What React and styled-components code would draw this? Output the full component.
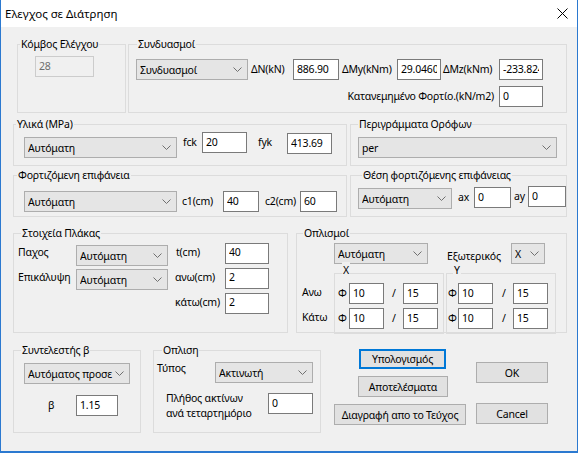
import React from 'react';
import styled, { createGlobalStyle } from 'styled-components';

const GlobalStyle = createGlobalStyle`
  * { box-sizing: border-box; }
  html, body {
    margin: 0;
    padding: 0;
    background: #f0f0f0;
  }
  body {
    font-family: "Noto Sans", "Open Sans", "Liberation Sans", sans-serif;
    font-size: 10.5px;
    letter-spacing: -0.2px;
    color: #000;
  }
`;

const Window = styled.div`
  width: 578px;
  height: 453px;
  border: 1px solid #2b79d0;
  border-top: none;
  border-bottom-width: 2px;
  background: #f0f0f0;
  display: flex;
  flex-direction: column;
  overflow: hidden;
`;

const TitleBar = styled.div`
  flex-shrink: 0;
  height: 27px;
  background: #fff;
  display: flex;
  align-items: center;
  justify-content: space-between;
  padding: 0 9px 0 4px;
  font-size: 11.5px;
  letter-spacing: 0;
`;

const Content = styled.div`
  padding-left: 12px;
  display: flex;
  flex-direction: column;
`;

const Row = styled.div`
  display: flex;
  align-items: flex-start;
  margin-top: ${p => p.$mt || 0}px;
  padding-left: ${p => p.$pl || 0}px;
  gap: ${p => p.$gap || 0}px;
`;

const Group = styled.div`
  position: relative;
  flex-shrink: 0;
  width: ${p => p.$w}px;
  height: ${p => p.$h}px;
  margin-left: ${p => p.$ml || 0}px;
  border: 1px solid #dcdcdc;
  padding: ${p => p.$pad || '0'};
  display: flex;
  flex-direction: column;
  align-items: flex-start;
`;

const Legend = styled.span`
  position: absolute;
  top: ${p => (p.$top === undefined ? -9 : p.$top)}px;
  left: ${p => p.$x}px;
  padding: 0 1px;
  line-height: 16px;
  background: #f0f0f0;
  white-space: nowrap;
`;

const Line = styled.div`
  display: flex;
  align-items: flex-start;
  margin: ${p => p.$m || '0'};
  align-self: ${p => (p.$end ? 'flex-end' : 'auto')};
`;

const Label = styled.span`
  flex-shrink: 0;
  width: ${p => (p.$w ? `${p.$w}px` : 'auto')};
  padding-left: ${p => p.$pl || 0}px;
  padding-right: ${p => p.$pr || 0}px;
  margin-top: ${p => p.$mt || 0}px;
  line-height: ${p => p.$lh || 21}px;
  text-align: ${p => p.$align || 'left'};
  white-space: nowrap;
`;

const TextBox = styled.input`
  flex-shrink: 0;
  width: ${p => p.$w}px;
  height: ${p => p.$h || 21}px;
  margin-top: ${p => p.$mt || 0}px;
  border: 1px solid ${p => (p.disabled ? '#cccccc' : '#7a7a7a')};
  background: ${p => (p.disabled ? '#f0f0f0' : '#fff')};
  color: ${p => (p.disabled ? '#6d6d6d' : '#000')};
  -webkit-text-fill-color: ${p => (p.disabled ? '#6d6d6d' : '#000')};
  font: inherit;
  letter-spacing: inherit;
  padding: 0 3px 2px;
  border-radius: 0;
  outline: none;
`;

const ComboBox = styled.div`
  flex-shrink: 0;
  width: ${p => p.$w}px;
  height: ${p => p.$h || 21}px;
  margin-top: ${p => p.$mt || 0}px;
  border: 1px solid #adadad;
  background: #e5e5e5;
  display: flex;
  align-items: center;
  padding: 0 5px 0 3px;
`;

const ComboText = styled.span`
  flex: 1;
  min-width: 0;
  overflow: hidden;
  white-space: nowrap;
  padding-top: 1px;
`;

const Grid = styled.div`
  display: grid;
  grid-template-columns: 58px 92px 57px 44px;
  grid-auto-rows: 21px;
  row-gap: 4px;
  margin: 8px 0 0 4px;
`;

const Cell = styled.div`
  grid-column: ${p => p.$col};
  grid-row: ${p => p.$row};
  padding-left: ${p => p.$pl || 0}px;
  line-height: 21px;
  white-space: nowrap;
`;

const Stack = styled.div`
  display: flex;
  flex-direction: column;
  gap: ${p => p.$gap || 0}px;
  width: ${p => (p.$w ? `${p.$w}px` : 'auto')};
  padding-top: ${p => p.$pt || 0}px;
  margin-top: ${p => p.$mt || 0}px;
  margin-left: ${p => p.$ml || 0}px;
  flex-shrink: 0;
`;

const Button = styled.button`
  flex-shrink: 0;
  width: ${p => p.$w}px;
  height: ${p => p.$h || 21}px;
  margin-left: ${p => p.$ml || 0}px;
  margin-top: ${p => p.$mt || 0}px;
  padding: 0;
  font: inherit;
  letter-spacing: inherit;
  color: #000;
  background: #e1e1e1;
  border: 1px solid ${p => (p.$focus ? '#0078d7' : '#adadad')};
  box-shadow: ${p => (p.$focus ? 'inset 0 0 0 1px #0078d7' : 'none')};
  border-radius: 0;
  white-space: nowrap;
`;

const Chevron = () => (
  <svg width="9" height="5" viewBox="0 0 9 5">
    <path d="M0.5 0.5 L4.5 4.5 L8.5 0.5" fill="none" stroke="#707070" strokeWidth="1" />
  </svg>
);

const CloseIcon = () => (
  <svg width="11" height="11" viewBox="0 0 11 11">
    <path d="M0.5 0.5 L10.5 10.5 M10.5 0.5 L0.5 10.5" stroke="#000" strokeWidth="1" />
  </svg>
);

const Combo = ({ w, h, mt, children }) => (
  <ComboBox $w={w} $h={h} $mt={mt}>
    <ComboText>{children}</ComboText>
    <Chevron />
  </ComboBox>
);

const BarRow = ({ phiW, pl, slashPl, slashW }) => (
  <Line>
    <Label $w={phiW} $pl={pl}>Φ</Label>
    <TextBox $w={35} defaultValue="10" />
    <Label $w={slashW} $pl={slashPl}>/</Label>
    <TextBox $w={35} defaultValue="15" />
  </Line>
);

const BarGroup = ({ title, lx, ml, ...bar }) => (
  <Group $w={110} $h={61} $ml={ml} $pad="9px 0 0 0">
    <Legend $x={lx} $top={-12}>{title}</Legend>
    <Stack $gap={4}>
      <BarRow {...bar} />
      <BarRow {...bar} />
    </Stack>
  </Group>
);

export default function App() {
  return (
    <>
      <GlobalStyle />
      <Window>
        <TitleBar>
          <span>Ελεγχος σε Διάτρηση</span>
          <CloseIcon />
        </TitleBar>
        <Content>
          <Row $mt={17} $pl={4} $gap={2}>
            <Group $w={109} $h={69} $pad="11px 0 0 17px">
              <Legend $x={2}>Κόμβος Ελέγχου</Legend>
              <TextBox $w={59} disabled defaultValue="28" />
            </Group>
            <Group $w={439} $h={69}>
              <Legend $x={8}>Συνδυασμοί</Legend>
              <Line $m="14px 0 0 7px">
                <Combo w={112}>Συνδυασμοί</Combo>
                <Label $w={45} $pl={3}>ΔN(kN)</Label>
                <TextBox $w={46} defaultValue="886.90" />
                <Label $w={58} $pl={3}>ΔMy(kNm)</Label>
                <TextBox $w={44} defaultValue="29.0460" />
                <Label $w={58} $pl={2}>ΔMz(kNm)</Label>
                <TextBox $w={44} defaultValue="-233.8245" />
              </Line>
              <Line $m="6px 23px 0 0" $end>
                <Label $pr={5}>Κατανεμημένο Φορτίο.(kN/m2)</Label>
                <TextBox $w={44} defaultValue="0" />
              </Line>
            </Group>
          </Row>

          <Row $mt={11} $gap={3}>
            <Group $w={334} $h={42}>
              <Legend $x={2}>Υλικά (MPa)</Legend>
              <Line $m="0 0 0 10px">
                <Combo w={153} mt={12}>Αυτόματη</Combo>
                <Label $w={25} $pl={6} $mt={7}>fck</Label>
                <TextBox $w={45} $mt={7} defaultValue="20" />
                <Label $w={40} $pl={11} $mt={7}>fyk</Label>
                <TextBox $w={45} $mt={8} defaultValue="413.69" />
              </Line>
            </Group>
            <Group $w={217} $h={42}>
              <Legend $x={7}>Περιγράμματα Ορόφων</Legend>
              <Line $m="0 0 0 7px">
                <Combo w={199} mt={12}>per</Combo>
              </Line>
            </Group>
          </Row>

          <Row $mt={9} $gap={3}>
            <Group $w={334} $h={42}>
              <Legend $x={3}>Φορτιζόμενη επιφάνεια</Legend>
              <Line $m="0 0 0 10px">
                <Combo w={153} mt={15}>Αυτόματη</Combo>
                <Label $w={46} $pl={5} $mt={15}>c1(cm)</Label>
                <TextBox $w={36} $mt={15} defaultValue="40" />
                <Label $w={41} $pl={6} $mt={15}>c2(cm)</Label>
                <TextBox $w={37} $mt={15} defaultValue="60" />
              </Line>
            </Group>
            <Group $w={217} $h={42}>
              <Legend $x={11}>Θέση φορτιζόμενης επιφάνειας</Legend>
              <Line $m="0 0 0 7px">
                <Combo w={94} mt={12}>Αυτόματη</Combo>
                <Label $w={22} $pl={6} $mt={11}>ax</Label>
                <TextBox $w={37} $mt={11} defaultValue="0" />
                <Label $w={17} $pl={3} $mt={10}>ay</Label>
                <TextBox $w={38} $mt={10} defaultValue="0" />
              </Line>
            </Group>
          </Row>

          <Row $mt={16} $gap={8}>
            <Group $w={275} $h={100}>
              <Legend $x={7}>Στοιχεία Πλάκας</Legend>
              <Grid>
                <Cell $col={1} $row={1}>Παχος</Cell>
                <Cell $col={2} $row={1}>
                  <Combo w={92} mt={3}>Αυτόματη</Combo>
                </Cell>
                <Cell $col={3} $row={1} $pl={8}>t(cm)</Cell>
                <Cell $col={4} $row={1}>
                  <TextBox $w={44} defaultValue="40" />
                </Cell>
                <Cell $col={1} $row={2}>Επικάλυψη</Cell>
                <Cell $col={2} $row={2}>
                  <Combo w={92} mt={2}>Αυτόματη</Combo>
                </Cell>
                <Cell $col={3} $row={2} $pl={7}>ανω(cm)</Cell>
                <Cell $col={4} $row={2}>
                  <TextBox $w={44} defaultValue="2" />
                </Cell>
                <Cell $col={3} $row={3} $pl={7}>κάτω(cm)</Cell>
                <Cell $col={4} $row={3}>
                  <TextBox $w={44} defaultValue="2" />
                </Cell>
              </Grid>
            </Group>
            <Group $w={271} $h={100}>
              <Legend $x={6}>Οπλισμοί</Legend>
              <Line $m="9px 0 0 37px">
                <Combo w={94}>Αυτόματη</Combo>
                <Label $w={83} $pl={19} $mt={3}>Εξωτερικός</Label>
                <Combo w={34}>X</Combo>
              </Line>
              <Line $m="6px 0 0 0">
                <Stack $w={37} $pt={9} $gap={4}>
                  <Label $pl={5}>Ανω</Label>
                  <Label $pl={5}>Κάτω</Label>
                </Stack>
                <BarGroup title="X" lx={7} phiW={14} pl={3} slashPl={8} slashW={19} />
                <BarGroup title="Y" lx={6} ml={2} phiW={11} pl={1} slashPl={9} slashW={20} />
              </Line>
            </Group>
          </Row>

          <Row $mt={17}>
            <Group $w={128} $h={83} $pad="12px 0 0 10px">
              <Legend $x={7}>Συντελεστής β</Legend>
              <Combo w={106}>Αυτόματος προσε</Combo>
              <Line $m="11px 0 0 0">
                <Label $w={52} $pl={24}>β</Label>
                <TextBox $w={42} defaultValue="1.15" />
              </Line>
            </Group>
            <Group $w={168} $h={83} $ml={12} $pad="11px 0 0 0">
              <Legend $x={8}>Οπλιση</Legend>
              <Line>
                <Label $w={61} $pl={3} $mt={-4}>Τύπος</Label>
                <Combo w={98}>Ακτινωτή</Combo>
              </Line>
              <Line $m="10px 0 0 0">
                <Label $w={114} $pl={12} $lh={15} $mt={-2}>
                  Πλήθος ακτίνων
                  <br />
                  ανά τεταρτημόριο
                </Label>
                <TextBox $w={45} defaultValue="0" />
              </Line>
            </Group>
            <Stack $w={132} $ml={13} $mt={-1} $gap={7}>
              <Button $w={87} $h={20} $ml={25} $focus>Υπολογισμός</Button>
              <Button $w={90} $ml={24}>Αποτελέσματα</Button>
              <Button $w={132}>Διαγραφή απο το Τεύχος</Button>
            </Stack>
            <Stack $ml={10} $mt={-1}>
              <Button $w={72} $mt={13}>OK</Button>
              <Button $w={72} $mt={20}>Cancel</Button>
            </Stack>
          </Row>
        </Content>
      </Window>
    </>
  );
}
